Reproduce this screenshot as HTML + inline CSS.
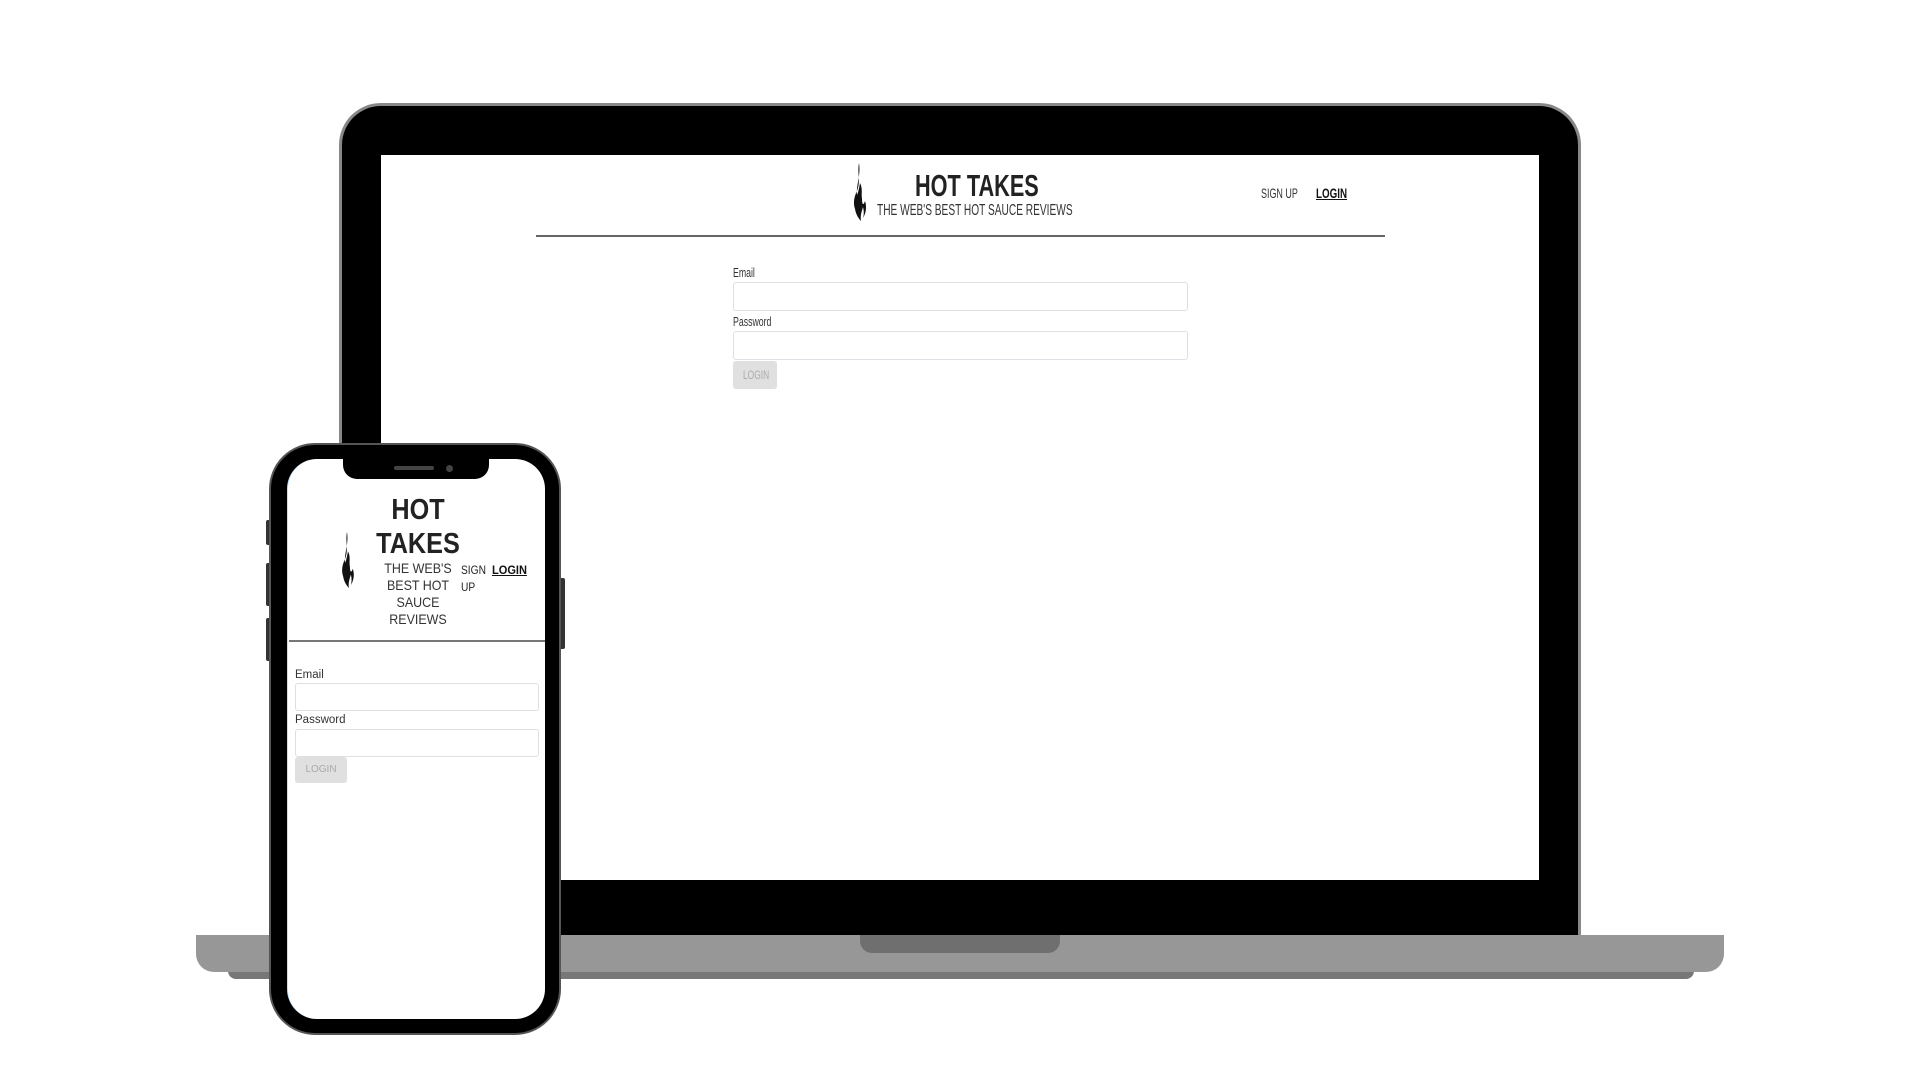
<!DOCTYPE html>
<html><head><meta charset="utf-8"><style>
*{margin:0;padding:0;box-sizing:border-box}
body{width:1920px;height:1080px;background:#fff;position:relative;overflow:hidden;font-family:"Liberation Sans",sans-serif;color:#222}
.a{position:absolute}
.sx{transform:scaleX(0.7);transform-origin:left top;white-space:nowrap}
.inp{position:absolute;border:1px solid #dcdfe3;border-radius:3px;background:#fff}
.btn{position:absolute;background:#e0e0e0;border-radius:3px;color:#aaa;font-size:11px;text-align:center}
</style></head><body>
<div class="a" style="left:339px;top:103px;width:1242px;height:840px;background:#000;border:3px solid #888;border-bottom:none;border-radius:42px 42px 0 0"></div>
<div class="a" style="left:381px;top:155px;width:1158px;height:725px;background:#fff"></div>
<div class="a" style="left:228px;top:960px;width:1466px;height:19px;background:#777;border-radius:0 0 8px 8px"></div>
<div class="a" style="left:196px;top:935px;width:1528px;height:37px;background:#979797;border-radius:0 0 18px 18px"></div>
<div class="a" style="left:860px;top:935px;width:200px;height:18px;background:#6f6f6f;border-radius:0 0 12px 12px"></div>

<svg class="a" style="left:851px;top:163px" width="16" height="58" viewBox="0 0 16 58"><path d="M8 0C6 10 10 18 6 28C3 34 2 40 4 46C5 52 8 56 10 58C9 52 11 48 12 44C13 48 13 52 12 55C15 50 16 44 14 38C12 44 11 40 11 36C10 30 12 26 9 20C8 26 7 30 6 32C5 22 10 12 8 0Z" fill="#111"/></svg>
<div class="a sx" style="left:915px;top:168px;font-size:31px;font-weight:bold;color:#222">HOT TAKES</div>
<div class="a sx" style="left:877px;top:202px;font-size:15.5px;color:#333;transform:scaleX(0.655)">THE WEB'S BEST HOT SAUCE REVIEWS</div>
<div class="a sx" style="left:1261px;top:185px;font-size:14px;color:#333;transform:scaleX(0.64)">SIGN UP</div>
<div class="a sx" style="left:1316px;top:185px;font-size:14px;font-weight:bold;text-decoration:underline;color:#111">LOGIN</div>
<div class="a" style="left:536px;top:235px;width:849px;height:2px;background:#666"></div>
<div class="a sx" style="left:733px;top:266px;font-size:12.5px;color:#333">Email</div>
<div class="inp" style="left:733px;top:282px;width:455px;height:29px"></div>
<div class="a sx" style="left:733px;top:315px;font-size:12.5px;color:#333">Password</div>
<div class="inp" style="left:733px;top:331px;width:455px;height:29px"></div>
<div class="btn" style="left:733px;top:361px;width:44px;height:28px"><span class="a sx" style="left:10px;top:7px;font-size:12px">LOGIN</span></div>

<div class="a" style="left:266px;top:520px;width:5px;height:25px;background:#333;border-radius:2px"></div>
<div class="a" style="left:266px;top:563px;width:5px;height:43px;background:#333;border-radius:2px"></div>
<div class="a" style="left:266px;top:618px;width:5px;height:43px;background:#333;border-radius:2px"></div>
<div class="a" style="left:559px;top:578px;width:6px;height:71px;background:#333;border-radius:2px"></div>
<div class="a" style="left:269px;top:443px;width:292px;height:592px;background:#000;border:2px solid #555;border-radius:46px"></div>
<div class="a" style="left:287px;top:459px;width:258px;height:560px;background:#fff;border-radius:30px;border-left:1px solid #bde0ff"></div>
<div class="a" style="left:343px;top:459px;width:146px;height:20px;background:#000;border-radius:0 0 14px 14px"></div>
<div class="a" style="left:394px;top:466px;width:40px;height:4px;background:#444;border-radius:2px"></div>
<div class="a" style="left:446px;top:465px;width:7px;height:7px;background:#444;border-radius:50%"></div>

<svg class="a" style="left:338px;top:532px" width="18" height="56" viewBox="0 0 16 58"><path d="M8 0C6 10 10 18 6 28C3 34 2 40 4 46C5 52 8 56 10 58C9 52 11 48 12 44C13 48 13 52 12 55C15 50 16 44 14 38C12 44 11 40 11 36C10 30 12 26 9 20C8 26 7 30 6 32C5 22 10 12 8 0Z" fill="#111"/></svg>
<div class="a" style="left:360px;top:493px;width:116px;text-align:center;font-size:29px;font-weight:bold;line-height:34px;color:#222;transform:scaleX(0.87)">HOT<br>TAKES</div>
<div class="a" style="left:373px;top:560px;width:90px;text-align:center;font-size:14px;line-height:17px;color:#333;transform:scaleX(0.89)">THE WEB'S<br>BEST HOT<br>SAUCE<br>REVIEWS</div>
<div class="a" style="left:461px;top:562px;font-size:12px;line-height:17px;color:#222;transform:scaleX(0.85);transform-origin:left top">SIGN<br>UP</div>
<div class="a" style="left:492px;top:562px;font-size:12px;line-height:17px;font-weight:bold;text-decoration:underline;color:#111;transform:scaleX(0.92);transform-origin:left top">LOGIN</div>
<div class="a" style="left:289px;top:640px;width:256px;height:2px;background:#777"></div>
<div class="a" style="left:295px;top:669px;font-size:11.5px;color:#333">Email</div>
<div class="inp" style="left:295px;top:683px;width:244px;height:28px"></div>
<div class="a" style="left:295px;top:714px;font-size:11.5px;color:#333">Password</div>
<div class="inp" style="left:295px;top:729px;width:244px;height:28px"></div>
<div class="btn" style="left:295px;top:757px;width:52px;height:26px;line-height:26px;font-size:10px">LOGIN</div>
</body></html>
